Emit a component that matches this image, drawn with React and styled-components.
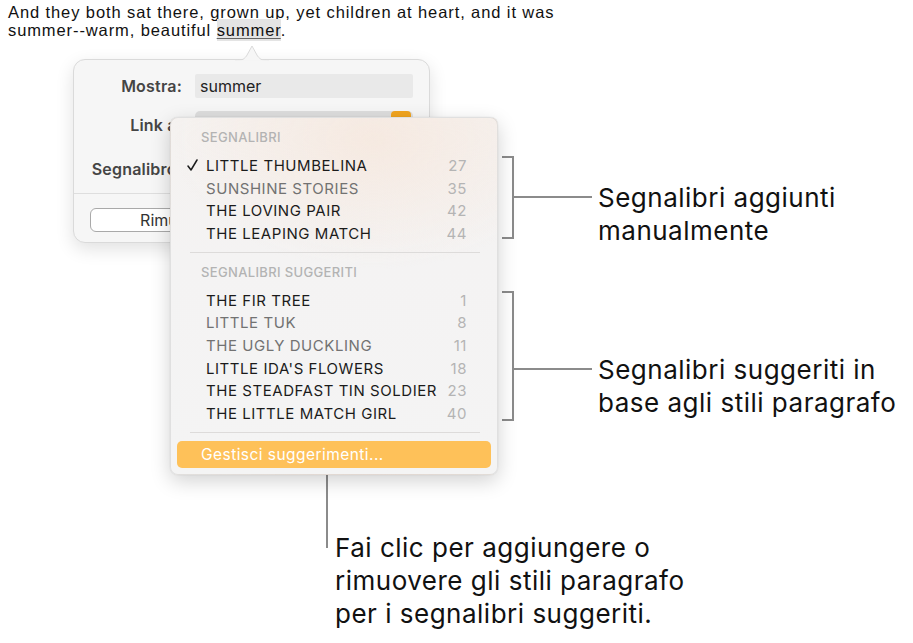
import React from "react";
import styled, { createGlobalStyle } from "styled-components";

const Global = createGlobalStyle`
  html, body { margin: 0; padding: 0; background: #ffffff; }
  body { width: 913px; height: 643px; overflow: hidden; }
  * { box-sizing: border-box; }
`;

const Page = styled.div`
  position: relative;
  width: 913px;
  height: 643px;
  background: #fff;
`;

const Paragraph = styled.p`
  margin: 0;
  padding: 4px 8px 0 8px;
  font-family: "Liberation Sans", Arial, sans-serif;
  font-size: 16.5px;
  letter-spacing: 0.9px;
  line-height: 17.5px;
  color: #111;
  white-space: nowrap;
`;

const Mark = styled.span`
  background: #e4e4e4;
  text-decoration: underline;
  text-decoration-color: #666;
  text-underline-offset: 2px;
  padding: 2px 0 2px;
`;

const Popover = styled.div`
  position: relative;
  margin: 20px 0 0 73px;
  width: 357px;
  height: 184px;
  background: #f6f6f6;
  border: 1px solid #dadada;
  border-radius: 12px;
  box-shadow: 0 6px 18px rgba(0, 0, 0, 0.12);
  font-family: Inter, "Noto Sans", sans-serif;
`;

const Arrow = styled.div`
  position: absolute;
  top: -16px;
  left: 161px;
  width: 34px;
  height: 17px;
  svg { display: block; }
`;

const Form = styled.div`
  display: grid;
  grid-template-columns: 108px 218px;
  grid-template-rows: 24px 28px 34px;
  column-gap: 13px;
  row-gap: 13px;
  padding: 14px 0 0 0;
  align-items: center;
`;

const Label = styled.div`
  text-align: right;
  font-size: 16px;
  font-weight: 600;
  letter-spacing: 0.2px;
  color: #454545;
  white-space: nowrap;
`;

const Field = styled.div`
  position: relative;
  height: ${(p) => (p.$dark ? 28 : 24)}px;
  align-self: start;
  background: ${(p) => (p.$dark ? "#dedede" : "#e9e9e9")};
  border-radius: ${(p) => (p.$dark ? 5 : 2)}px;
  padding-left: 5px;
  font-size: 16px;
  line-height: 24px;
  color: #222;
`;

const PopupButton = styled.div`
  position: absolute;
  right: 2px;
  top: 0;
  width: 20px;
  height: 22px;
  border-radius: 4px;
  background: #f2a51f;
`;

const Spacer = styled.div`
  height: 24px;
`;

const Divider = styled.div`
  height: 1px;
  background: #dedede;
  margin-top: 7px;
`;

const Button = styled.div`
  margin: 14px 0 0 16px;
  width: 160px;
  height: 24px;
  border: 1px solid #a9a9a9;
  border-radius: 6px;
  background: #fff;
  font-size: 16px;
  line-height: 22px;
  text-align: center;
  color: #333;
`;

const Menu = styled.div`
  position: absolute;
  left: 170px;
  top: 117px;
  width: 328px;
  height: 358px;
  padding: 8px 0 6px;
  display: flex;
  flex-direction: column;
  border-radius: 8px;
  border: 1px solid rgba(0, 0, 0, 0.08);
  background:
    radial-gradient(ellipse 200px 130px at 62% 6%, rgba(246, 232, 222, 0.85), rgba(246, 232, 222, 0) 100%),
    linear-gradient(180deg, #f5f2f0 0%, #f4f3f3 40%, #f4f4f4 100%);
  box-shadow: 0 6px 20px rgba(0, 0, 0, 0.18), 0 0 1px rgba(0, 0, 0, 0.2);
  font-family: Inter, "Noto Sans", sans-serif;
  z-index: 2;
`;

const Header = styled.div`
  height: 22px;
  line-height: 22px;
  padding-left: 30px;
  font-size: 13px;
  font-weight: 500;
  letter-spacing: 0.35px;
  color: #b3b3b3;
  margin-bottom: 6px;
`;

const Row = styled.div`
  display: grid;
  grid-template-columns: 35px 1fr auto;
  align-items: center;
  height: 23px;
  padding-right: 30px;
  font-size: 15px;
  letter-spacing: 0.55px;
  color: ${(p) => (p.$dim ? "#727272" : "#1b1b1b")};
`;

const Check = styled.span`
  padding-left: 16px;
  display: flex;
  align-items: center;
  svg { display: block; }
`;

const Num = styled.span`
  color: #b4b4b4;
  text-align: right;
`;

const MenuDivider = styled.div`
  height: 1px;
  background: #dddbda;
  margin: 7px 17px 8px 19px;
`;

const Highlight = styled.div`
  margin: 0 6px 0 6px;
  height: 27px;
  border-radius: 5px;
  background: #fec159;
  color: #fff;
  font-size: 15.5px;
  line-height: 27px;
  padding-left: 24px;
  letter-spacing: 0.45px;
`;

const Callout = styled.div`
  position: absolute;
  left: ${(p) => p.$x}px;
  top: ${(p) => p.$y}px;
  display: flex;
  align-items: flex-start;
  font-family: Inter, "Noto Sans", sans-serif;
  z-index: 1;
`;

const Bracket = styled.div`
  width: 12px;
  height: ${(p) => p.$h}px;
  border: 2px solid #8b8b8b;
  border-left: none;
  flex: none;
`;

const Leader = styled.div`
  width: 78px;
  height: 2px;
  background: #8b8b8b;
  margin-top: ${(p) => p.$at}px;
  flex: none;
`;

const VLeader = styled.div`
  width: 2px;
  height: ${(p) => p.$h}px;
  background: #8b8b8b;
  flex: none;
`;

const Note = styled.div`
  margin-top: ${(p) => p.$at}px;
  margin-left: ${(p) => p.$ml || 6}px;
  font-size: 26px;
  letter-spacing: 0.5px;
  line-height: 33px;
  color: #111;
  white-space: nowrap;
`;

const manual = [
  { t: "LITTLE THUMBELINA", n: 27, check: true },
  { t: "SUNSHINE STORIES", n: 35, dim: true },
  { t: "THE LOVING PAIR", n: 42 },
  { t: "THE LEAPING MATCH", n: 44 },
];

const suggested = [
  { t: "THE FIR TREE", n: 1 },
  { t: "LITTLE TUK", n: 8, dim: true },
  { t: "THE UGLY DUCKLING", n: 11, dim: true },
  { t: "LITTLE IDA'S FLOWERS", n: 18 },
  { t: "THE STEADFAST TIN SOLDIER", n: 23 },
  { t: "THE LITTLE MATCH GIRL", n: 40 },
];

function Item({ t, n, check, dim }) {
  return (
    <Row $dim={dim}>
      <Check>
        {check ? (
          <svg width="11" height="12" viewBox="0 0 11 12">
            <path d="M1 7 L4 11 L10 1" fill="none" stroke="#1b1b1b" strokeWidth="1.5" strokeLinecap="round" strokeLinejoin="round" />
          </svg>
        ) : null}
      </Check>
      <span>{t}</span>
      <Num>{n}</Num>
    </Row>
  );
}

export default function App() {
  return (
    <Page>
      <Global />
      <Paragraph>
        And they both sat there, grown up, yet children at heart, and it was
        <br />
        summer--warm, beautiful <Mark>summer</Mark>.
      </Paragraph>

      <Popover>
        <Arrow>
          <svg width="34" height="17" viewBox="0 0 34 17">
            <path d="M0 16.5 C6 16.5 8.5 16 11.5 12 L17 2 L22.5 12 C25.5 16 28 16.5 34 16.5" fill="#f6f6f6" stroke="#dadada" strokeWidth="1" />
            <rect x="0" y="16.2" width="34" height="1" fill="#f6f6f6" />
          </svg>
        </Arrow>
        <Form>
          <Label>Mostra:</Label>
          <Field>summer</Field>
          <Label>Link a:</Label>
          <Field $dark>
            <PopupButton />
          </Field>
          <Label>Segnalibro:</Label>
          <Spacer />
        </Form>
        <Divider />
        <Button>Rimuovi</Button>
      </Popover>

      <Menu>
        <Header>SEGNALIBRI</Header>
        {manual.map((m) => (
          <Item key={m.t} {...m} />
        ))}
        <MenuDivider />
        <Header>SEGNALIBRI SUGGERITI</Header>
        {suggested.map((m) => (
          <Item key={m.t} {...m} />
        ))}
        <MenuDivider />
        <Highlight>Gestisci suggerimenti...</Highlight>
      </Menu>

      <Callout $x={502} $y={156}>
        <Bracket $h={83} />
        <Leader $at={40} />
        <Note $at={25}>
          Segnalibri aggiunti
          <br />
          manualmente
        </Note>
      </Callout>

      <Callout $x={502} $y={291}>
        <Bracket $h={130} />
        <Leader $at={77} />
        <Note $at={62}>
          Segnalibri suggeriti in
          <br />
          base agli stili paragrafo
        </Note>
      </Callout>

      <Callout $x={326} $y={469}>
        <VLeader $h={79} />
        <Note $at={62} $ml={7}>
          Fai clic per aggiungere o
          <br />
          rimuovere gli stili paragrafo
          <br />
          per i segnalibri suggeriti.
        </Note>
      </Callout>
    </Page>
  );
}
